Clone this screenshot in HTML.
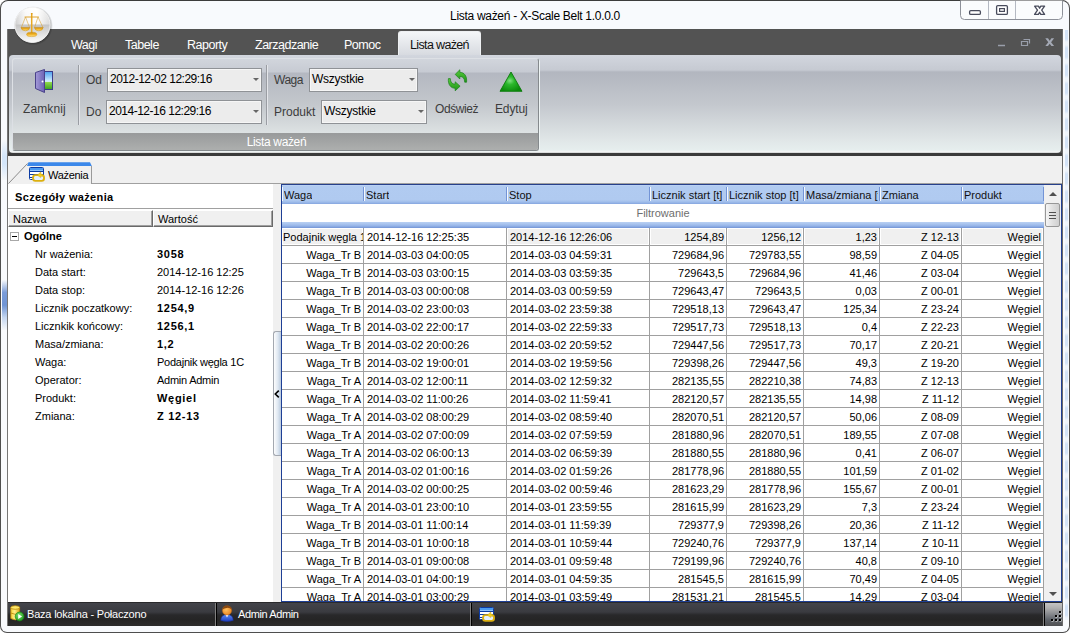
<!DOCTYPE html>
<html lang="pl"><head><meta charset="utf-8"><title>Lista ważeń - X-Scale Belt 1.0.0.0</title>
<style>
*{box-sizing:border-box;margin:0;padding:0}
html,body{width:1070px;height:633px;overflow:hidden;background:#fff}
body{position:relative;font-family:"Liberation Sans","DejaVu Sans",sans-serif;font-size:11px;color:#000}
.abs{position:absolute}
#frame{left:0;top:0;width:1070px;height:633px;border:1px solid #4e4e4e;border-top-color:#3c3c3c;border-radius:8px 8px 7px 7px;background:#f8fafd}
#title{left:0;top:9px;width:1070px;text-align:center;font-size:12px;color:#000;letter-spacing:-0.3px}
#dark{left:7px;top:29px;width:1056px;height:127px;background:#535353}
.mt{top:38px;font-size:12.5px;color:#fff;white-space:nowrap;letter-spacing:-0.5px}
#atab{left:398px;top:31px;width:83px;height:25px;border-radius:3px 3px 0 0;background:linear-gradient(#f4f6f8,#d6d9df);border:1px solid #eef0f2;border-bottom:none}
#atab span{position:absolute;left:0;width:100%;top:6px;text-align:center;font-size:12.5px;color:#111;letter-spacing:-0.65px}
#ribbon{left:9px;top:55px;width:1052px;height:98px;border-radius:4px;background:linear-gradient(#d2d6de 0,#c6cad2 15px,#b2b6bf 17px,#c4c8ce 50px,#e1e7e8 86px,#e6eeee 95px,#f2f4f4 96.500px,#cfd1d1 98px)}
#under{left:7px;top:153px;width:1056px;height:3px;background:#3b3b3b}
#group{left:12px;top:58px;width:527px;height:93px;border-radius:3px;border:1px solid #dde0e5;border-right-color:#858a8d;border-bottom-color:#858a8d;background:linear-gradient(#d1d5dc 0,#c7cbd3 12.500px,#b4b8c1 14.500px,#c3c7cc 45px,#dde2e3 74px);overflow:hidden;box-shadow:1px 1px 0 #eef4f4}
#gcap{left:0;top:74px;width:527px;height:18px;background:linear-gradient(#989a9b,#aeb0af);color:#fff;font-size:12px;text-align:center;line-height:18px;letter-spacing:-0.35px}
.rl{font-size:12px;color:#3c3c3c;white-space:nowrap}
.combo{height:24px;border:1px solid #8f9296;background:#ececec;font-size:12px;color:#000;line-height:21px;padding-left:2px;white-space:nowrap;letter-spacing:-0.5px;box-shadow:inset 0 0 0 1px #f6f6f6}
.combo i{position:absolute;right:2px;top:9px;width:0;height:0;border:3px solid transparent;border-top:3px solid #666;border-bottom:none}
.vsep{width:1px;background:#9a9da3;box-shadow:1px 0 0 #e4e6ea}
#below{left:8px;top:156px;width:1054px;height:29px;background:#f0f0f0}
#tabline{left:92px;top:183px;width:970px;height:1px;background:#a0a0a0}
#leftp{left:8px;top:184px;width:265px;height:418px;background:#fff;}
#split{left:273px;top:184px;width:8px;height:418px;background:#f0f0f0}
#gridb{left:281px;top:184px;width:781px;height:418px;background:#fff;border:1px solid #1e3f95;border-top-color:#27408b;overflow:hidden}
.hc{position:absolute;top:0;height:19px;background:linear-gradient(#c3d8f6 0,#b1cbf1 1px,#b0caf0 15px,#9fbdeb 17px,#84a5df 19px)}
.hc::before{content:"";position:absolute;left:0;top:2px;width:1px;height:14px;background:#f4f8fd}
.hc::after{content:"";position:absolute;right:0;top:2px;width:1px;height:14px;background:#7394d6}
.hc span{position:absolute;left:2px;top:4px;white-space:nowrap;color:#111;overflow:hidden;max-width:calc(100% - 4px)}
.row{position:absolute;left:0;width:762px;height:18px}
.c{position:absolute;top:0;height:18px;border-right:1px solid #a0a0a0;border-bottom:1px solid #a0a0a0;overflow:hidden;white-space:nowrap;line-height:19px}
.c.l{padding-left:3px;text-align:left}.c.l0{padding-left:1px;text-align:left}
.c.r{padding-right:2px;text-align:right}
.foc .c{background:#f0f0f0;box-shadow:inset 0 0 0 1px #fff}
.foc .c.fc{background:#fff}
.pn,.pv{position:absolute;white-space:nowrap;line-height:18px;height:18px}
.pn{left:27px}.pv{left:149px}
.b{font-weight:bold}.pv.b{letter-spacing:0.7px}
#status{left:8px;top:602px;width:1054px;height:24px;background:linear-gradient(#2a2a2c 0,#2a2a2c 1px,#43444a 1px,#3a3b40 10px,#28282a 13px,#252525 18px,#2c2c2c 24px)}
.st{position:absolute;top:6px;color:#fff;font-size:11px;white-space:nowrap}
.ssep{position:absolute;top:1px;width:1px;height:23px;background:#000;box-shadow:-1px 0 0 #808080}
</style></head><body>
<svg width="0" height="0" style="position:absolute"><defs>
<symbol id="tblico" viewBox="0 0 17 17">
  <rect x="0.500" y="1.500" width="14" height="12" rx="1" fill="#fff" stroke="#0b3ba3"/>
  <rect x="1" y="2" width="13" height="2.600" fill="#4a9af0"/>
  <path d="M1 5.500H14M1 8.500H14M1 11.500H14" stroke="#0b3ba3" stroke-width="1"/>
  <rect x="4.100" y="9.100" width="10.900" height="5.800" rx="2.300" fill="#e6f2fc" stroke="#dcb010" stroke-width="1.900"/>
  <path d="M8.300 9.300L11.800 5.800V8.200H13.600V10.300H11.800V11.500Z" fill="#f2d020" stroke="#c79a10" stroke-width="0.400"/>
</symbol></defs></svg>
<div id="frame" class="abs"></div>
<div id="title" class="abs">Lista ważeń - X-Scale Belt 1.0.0.0</div>

<!-- caption buttons -->
<svg class="abs" style="left:960px;top:0" width="104" height="21" viewBox="0 0 104 21">
 <path d="M0.500 0.500V15.500Q0.500 19.500 4.500 19.500H98.500Q102.500 19.500 102.500 15.500V0.500" fill="#fafcfd" stroke="#8d9199"/>
 <path d="M28.500 1V19M55.500 1V19" stroke="#b4b9c2"/>
 <rect x="9.600" y="10.600" width="10.800" height="3.800" rx="1.200" fill="#fff" stroke="#484c5c" stroke-width="1.300"/>
 <rect x="36.600" y="5.600" width="10.800" height="8.800" rx="1.200" fill="#fff" stroke="#484c5c" stroke-width="1.300"/>
 <rect x="39.600" y="8.600" width="4.800" height="2.800" fill="#fff" stroke="#484c5c" stroke-width="1.200"/>
 <path d="M74.600 6.200H78.400L79.600 8.200L80.800 6.200H84.600L81.700 10.200L84.600 14.400H80.800L79.600 12.300L78.400 14.400H74.600L77.500 10.200Z" fill="#fff" stroke="#484c5c" stroke-width="1.300" stroke-linejoin="round"/>
</svg>

<div id="dark" class="abs"></div>
<div class="abs mt" style="left:71px">Wagi</div>
<div class="abs mt" style="left:125px">Tabele</div>
<div class="abs mt" style="left:187px">Raporty</div>
<div class="abs mt" style="left:255px">Zarządzanie</div>
<div class="abs mt" style="left:344px">Pomoc</div>
<div id="atab" class="abs"><span>Lista ważeń</span></div>

<!-- mdi buttons -->
<svg class="abs" style="left:990px;top:33px" width="70" height="18" viewBox="0 0 70 18">
 <path d="M8 12.500H15" stroke="#999eaa" stroke-width="1.500"/>
 <path d="M33.500 6.500H39.500V10.500M31.500 8.500H37.500V12.500H31.500Z" fill="none" stroke="#999eaa" stroke-width="1.200"/>
 <path d="M55.300 5.300H58L59.700 7.700L61.400 5.300H64.100L61.100 9.200L64.100 13.100H61.400L59.700 10.700L58 13.100H55.300L58.300 9.200Z" fill="#a4a9b5"/>
</svg>

<div id="under" class="abs"></div>
<div id="ribbon" class="abs"></div>
<div id="group" class="abs">
  <div id="gcap" class="abs">Lista ważeń</div>
</div>
<!-- ribbon items (absolute to page) -->
<svg class="abs" style="left:33px;top:68px" width="22" height="26" viewBox="0 0 22 26">
  <defs><linearGradient id="sky" x1="0" y1="0" x2="0" y2="1"><stop offset="0" stop-color="#4aa0f0"/><stop offset="0.550" stop-color="#d8f0ff"/><stop offset="0.600" stop-color="#8fd84a"/><stop offset="1" stop-color="#3aa020"/></linearGradient>
  <linearGradient id="door" x1="0" y1="0" x2="1" y2="0"><stop offset="0" stop-color="#a49ad8"/><stop offset="1" stop-color="#6c62b4"/></linearGradient></defs>
  <rect x="9.500" y="3.500" width="10" height="18" fill="url(#sky)" stroke="#3a3a8a"/>
  <path d="M2.500 4.500L11.500 1.500V24.500L2.500 20.500Z" fill="url(#door)" stroke="#4a428a"/>
  <circle cx="9.500" cy="13.500" r="1" fill="#fff"/>
</svg>
<div class="abs rl" style="left:23px;top:102px;letter-spacing:0.1px">Zamknij</div>
<div class="abs vsep" style="left:78px;top:65px;height:60px"></div>
<div class="abs rl" style="left:86px;top:73px">Od</div>
<div class="abs combo" style="left:107px;top:68px;width:155px">2012-12-02 12:29:16<i></i></div>
<div class="abs rl" style="left:86px;top:105px">Do</div>
<div class="abs combo" style="left:106px;top:100px;width:156px">2014-12-16 12:29:16<i></i></div>
<div class="abs vsep" style="left:266px;top:65px;height:60px"></div>
<div class="abs rl" style="left:274px;top:73px;letter-spacing:-0.5px">Waga</div>
<div class="abs combo" style="left:309px;top:68px;width:109px;letter-spacing:-0.25px">Wszystkie<i></i></div>
<div class="abs rl" style="left:274px;top:105px">Produkt</div>
<div class="abs combo" style="left:321px;top:100px;width:106px;letter-spacing:-0.25px">Wszystkie<i></i></div>
<!-- refresh icon -->
<svg class="abs" style="left:446px;top:68px" width="24" height="26" viewBox="0 0 24 26">
  <defs><linearGradient id="rg" x1="0" y1="0" x2="0" y2="1"><stop offset="0" stop-color="#58cc3c"/><stop offset="1" stop-color="#1f9418"/></linearGradient></defs>
  <path d="M9.200 6.400L13.800 1.800L13.800 4.300C18.200 4.300 21.200 8 20.600 14.200L18.700 14.200C18.600 10.500 17 8.400 13.800 8.400L13.800 11Z" fill="url(#rg)" stroke="#1a801a" stroke-width="0.700"/>
  <path d="M14.100 18.200L9.200 22.800L9.200 20.300C4.800 20.300 1.800 16.500 2.400 10.600L4.300 10.600C4.400 14 6 16.200 9.200 16.200L9.200 13.800Z" fill="url(#rg)" stroke="#1a801a" stroke-width="0.700"/>
</svg>
<div class="abs rl" style="left:435px;top:102px;letter-spacing:-0.4px">Odśwież</div>
<svg class="abs" style="left:497px;top:68px" width="28" height="26" viewBox="0 0 28 26">
  <defs><radialGradient id="tri" cx="0.450" cy="0.450" r="0.600"><stop offset="0" stop-color="#7fe07f"/><stop offset="0.350" stop-color="#2cb82c"/><stop offset="1" stop-color="#0a8a0a"/></radialGradient></defs>
  <path d="M14 4L25 23.300H3Z" fill="url(#tri)" stroke="#0b7a0b" stroke-width="0.900" stroke-linejoin="round"/>
</svg>
<div class="abs rl" style="left:495px;top:102px;letter-spacing:-0.15px">Edytuj</div>

<!-- app button -->
<svg class="abs" style="left:10px;top:3px" width="46" height="46" viewBox="-2 -2 46 46">
  <defs>
  <radialGradient id="orbs" cx="0.500" cy="0.500" r="0.500"><stop offset="0.800" stop-color="#000" stop-opacity="0.450"/><stop offset="1" stop-color="#000" stop-opacity="0"/></radialGradient>
  <linearGradient id="orbt" x1="0" y1="0" x2="1" y2="0"><stop offset="0" stop-color="#c9c9c9"/><stop offset="0.300" stop-color="#f6f6f6"/><stop offset="0.600" stop-color="#ffffff"/><stop offset="1" stop-color="#d2d2d2"/></linearGradient>
  <linearGradient id="orbb" x1="0" y1="0" x2="0" y2="1"><stop offset="0" stop-color="#c4c4c4"/><stop offset="0.500" stop-color="#e2e2e2"/><stop offset="1" stop-color="#ffffff"/></linearGradient>
  <linearGradient id="orbv" x1="0" y1="0" x2="0" y2="1"><stop offset="0" stop-color="#fff" stop-opacity="0.900"/><stop offset="0.350" stop-color="#fff" stop-opacity="0.300"/><stop offset="1" stop-color="#fff" stop-opacity="0"/></linearGradient>
  <linearGradient id="gold" x1="0" y1="0" x2="0" y2="1"><stop offset="0" stop-color="#c98a10"/><stop offset="0.450" stop-color="#f0b020"/><stop offset="1" stop-color="#ffe28a"/></linearGradient>
  <clipPath id="orbclip"><circle cx="20.500" cy="19.900" r="17.400"/></clipPath>
  </defs>
  <circle cx="21.300" cy="20.800" r="19.600" fill="url(#orbs)"/>
  <circle cx="20.500" cy="19.900" r="17.800" fill="#d8d8d8"/>
  <g clip-path="url(#orbclip)">
    <rect x="2" y="1" width="38" height="18.600" fill="url(#orbt)"/>
    <rect x="2" y="1" width="38" height="18.600" fill="url(#orbv)"/>
    <rect x="2" y="19.600" width="38" height="19" fill="url(#orbb)"/>
  </g>
  <circle cx="20.500" cy="19.900" r="17.600" fill="none" stroke="#f4f4f4" stroke-width="0.800"/>
  <g fill="none" stroke="#dc9c1c" stroke-width="0.700">
    <path d="M19.700 8.400V28" stroke="#e8a822" stroke-width="1.500"/>
    <path d="M18.900 8.600H20.500" stroke-width="1.200"/>
    <path d="M12.600 12H26.800" stroke-width="0.900"/>
    <path d="M13.500 12L9.400 22.400M13.500 12L17.500 22.400M26 12L22.600 22.400M26 12L30.900 22.400" stroke="#d9a53a" stroke-width="0.600"/>
    <path d="M9 22.400H17.800Q17.300 25.800 13.400 25.800Q9.500 25.800 9 22.400Z" fill="url(#gold)" stroke="#c98a10" stroke-width="0.500"/>
    <path d="M22.400 22.400H31.200Q30.700 25.800 26.800 25.800Q22.900 25.800 22.400 22.400Z" fill="url(#gold)" stroke="#c98a10" stroke-width="0.500"/>
    <ellipse cx="19.700" cy="29.400" rx="5.100" ry="2.200" fill="url(#gold)" stroke="#d09418" stroke-width="0.500"/>
  </g>
</svg>

<div id="below" class="abs"></div>
<div id="tabline" class="abs"></div>
<!-- Ważenia tab -->
<svg class="abs" style="left:8px;top:161px" width="90" height="24" viewBox="0 0 90 24">
  <path d="M0.500 22.500L19.500 2.500" stroke="#8a8a8a" fill="none"/>
  <path d="M83.500 5V23" stroke="#9a9a9a"/>
  <path d="M19 5L20.500 1.300H82L83.800 5Z" fill="#3b88ea"/>
</svg>
<svg class="abs" style="left:29px;top:166px" width="17" height="17" viewBox="0 0 17 17"><use href="#tblico"/></svg>
<div class="abs" style="left:48px;top:169px;font-size:11px;letter-spacing:-0.3px">Ważenia</div>

<div id="leftp" class="abs">
  <div class="abs b" style="left:7px;top:7px;font-size:11px;letter-spacing:0.35px">Sczegóły ważenia</div>
  <div class="abs" style="left:0;top:24px;width:265px;height:1px;background:#a0a0a0"></div>
  <div class="abs" style="left:0;top:26px;width:145px;height:17px;background:#f0f0f0;border:1px solid #fff;border-right:1px solid #696969;border-bottom:1px solid #696969;box-shadow:inset -1px -1px 0 #a0a0a0;padding:2px 0 0 4px">Nazwa</div>
  <div class="abs" style="left:145px;top:26px;width:120px;height:17px;background:#f0f0f0;border:1px solid #fff;border-right:1px solid #696969;border-bottom:1px solid #696969;box-shadow:inset -1px -1px 0 #a0a0a0;padding:2px 0 0 4px">Wartość</div>
  <div class="abs" style="left:2px;top:48px;width:9px;height:9px;border:1px solid #a8a8a8;background:#fff"></div>
  <div class="abs" style="left:4px;top:52px;width:5px;height:1px;background:#000"></div>
  <div class="abs b" style="left:16px;top:43px;line-height:18px">Ogólne</div>
  <div class="pn" style="top:61px">Nr ważenia:</div><div class="pv b" style="top:61px">3058</div>
<div class="pn" style="top:79px">Data start:</div><div class="pv" style="top:79px">2014-12-16 12:25</div>
<div class="pn" style="top:97px">Data stop:</div><div class="pv" style="top:97px">2014-12-16 12:26</div>
<div class="pn" style="top:115px">Licznik poczatkowy:</div><div class="pv b" style="top:115px">1254,9</div>
<div class="pn" style="top:133px">Licznkik końcowy:</div><div class="pv b" style="top:133px">1256,1</div>
<div class="pn" style="top:151px">Masa/zmiana:</div><div class="pv b" style="top:151px">1,2</div>
<div class="pn" style="top:169px">Waga:</div><div class="pv" style="top:169px;letter-spacing:-0.25px">Podajnik węgla 1C</div>
<div class="pn" style="top:187px">Operator:</div><div class="pv" style="top:187px;letter-spacing:-0.25px">Admin Admin</div>
<div class="pn" style="top:205px">Produkt:</div><div class="pv b" style="top:205px">Węgiel</div>
<div class="pn" style="top:223px">Zmiana:</div><div class="pv b" style="top:223px">Z 12-13</div>

</div>
<div id="split" class="abs">
  <div class="abs" style="left:0px;top:147px;width:8px;height:125px;border:1px solid #a3a8b0;border-right:none;border-radius:3px 0 0 3px;background:linear-gradient(90deg,#fdfdfd,#dfe8f2 55%,#b9c9dd)"></div>
  <svg class="abs" style="left:0;top:204px" width="8" height="12" viewBox="0 0 8 12"><path d="M5.800 2.600L2.300 6L5.800 9.400" fill="none" stroke="#000" stroke-width="1.600"/></svg>
</div>
<div id="gridb" class="abs">
  <div class="hc" style="left:0px;width:82px"><span>Waga</span></div><div class="hc" style="left:82px;width:143px"><span>Start</span></div><div class="hc" style="left:225px;width:143px"><span>Stop</span></div><div class="hc" style="left:368px;width:77px"><span>Licznik start [t]</span></div><div class="hc" style="left:445px;width:77px"><span>Licznik stop [t]</span></div><div class="hc" style="left:522px;width:76px"><span>Masa/zmiana [t]</span></div><div class="hc" style="left:598px;width:82px"><span>Zmiana</span></div><div class="hc" style="left:680px;width:82px"><span>Produkt</span></div>
  <div class="abs" style="left:0;top:19px;width:762px;height:18px;background:#fff;color:#6e6e6e;text-align:center;line-height:18px">Filtrowanie</div>
  <div class="abs" style="left:0;top:37px;width:762px;height:6px;background:linear-gradient(#b9d0f3 0,#a9c4ee 2px,#94b3e7 4px,#7193d6 6px)"></div>
  <div class="row foc" style="top:43px"><div class="c l0" style="left:0px;width:82px"><span>Podajnik węgla 1C</span></div><div class="c l fc" style="left:82px;width:143px"><span>2014-12-16 12:25:35</span></div><div class="c l" style="left:225px;width:143px"><span>2014-12-16 12:26:06</span></div><div class="c r" style="left:368px;width:77px"><span>1254,89</span></div><div class="c r" style="left:445px;width:77px"><span>1256,12</span></div><div class="c r" style="left:522px;width:76px"><span>1,23</span></div><div class="c r" style="left:598px;width:82px"><span>Z 12-13</span></div><div class="c r" style="left:680px;width:82px"><span>Węgiel</span></div></div>
<div class="row" style="top:61px"><div class="c r" style="left:0px;width:82px"><span>Waga_Tr B</span></div><div class="c l" style="left:82px;width:143px"><span>2014-03-03 04:00:05</span></div><div class="c l" style="left:225px;width:143px"><span>2014-03-03 04:59:31</span></div><div class="c r" style="left:368px;width:77px"><span>729684,96</span></div><div class="c r" style="left:445px;width:77px"><span>729783,55</span></div><div class="c r" style="left:522px;width:76px"><span>98,59</span></div><div class="c r" style="left:598px;width:82px"><span>Z 04-05</span></div><div class="c r" style="left:680px;width:82px"><span>Węgiel</span></div></div>
<div class="row" style="top:79px"><div class="c r" style="left:0px;width:82px"><span>Waga_Tr B</span></div><div class="c l" style="left:82px;width:143px"><span>2014-03-03 03:00:15</span></div><div class="c l" style="left:225px;width:143px"><span>2014-03-03 03:59:35</span></div><div class="c r" style="left:368px;width:77px"><span>729643,5</span></div><div class="c r" style="left:445px;width:77px"><span>729684,96</span></div><div class="c r" style="left:522px;width:76px"><span>41,46</span></div><div class="c r" style="left:598px;width:82px"><span>Z 03-04</span></div><div class="c r" style="left:680px;width:82px"><span>Węgiel</span></div></div>
<div class="row" style="top:97px"><div class="c r" style="left:0px;width:82px"><span>Waga_Tr B</span></div><div class="c l" style="left:82px;width:143px"><span>2014-03-03 00:00:08</span></div><div class="c l" style="left:225px;width:143px"><span>2014-03-03 00:59:59</span></div><div class="c r" style="left:368px;width:77px"><span>729643,47</span></div><div class="c r" style="left:445px;width:77px"><span>729643,5</span></div><div class="c r" style="left:522px;width:76px"><span>0,03</span></div><div class="c r" style="left:598px;width:82px"><span>Z 00-01</span></div><div class="c r" style="left:680px;width:82px"><span>Węgiel</span></div></div>
<div class="row" style="top:115px"><div class="c r" style="left:0px;width:82px"><span>Waga_Tr B</span></div><div class="c l" style="left:82px;width:143px"><span>2014-03-02 23:00:03</span></div><div class="c l" style="left:225px;width:143px"><span>2014-03-02 23:59:38</span></div><div class="c r" style="left:368px;width:77px"><span>729518,13</span></div><div class="c r" style="left:445px;width:77px"><span>729643,47</span></div><div class="c r" style="left:522px;width:76px"><span>125,34</span></div><div class="c r" style="left:598px;width:82px"><span>Z 23-24</span></div><div class="c r" style="left:680px;width:82px"><span>Węgiel</span></div></div>
<div class="row" style="top:133px"><div class="c r" style="left:0px;width:82px"><span>Waga_Tr B</span></div><div class="c l" style="left:82px;width:143px"><span>2014-03-02 22:00:17</span></div><div class="c l" style="left:225px;width:143px"><span>2014-03-02 22:59:33</span></div><div class="c r" style="left:368px;width:77px"><span>729517,73</span></div><div class="c r" style="left:445px;width:77px"><span>729518,13</span></div><div class="c r" style="left:522px;width:76px"><span>0,4</span></div><div class="c r" style="left:598px;width:82px"><span>Z 22-23</span></div><div class="c r" style="left:680px;width:82px"><span>Węgiel</span></div></div>
<div class="row" style="top:151px"><div class="c r" style="left:0px;width:82px"><span>Waga_Tr B</span></div><div class="c l" style="left:82px;width:143px"><span>2014-03-02 20:00:26</span></div><div class="c l" style="left:225px;width:143px"><span>2014-03-02 20:59:52</span></div><div class="c r" style="left:368px;width:77px"><span>729447,56</span></div><div class="c r" style="left:445px;width:77px"><span>729517,73</span></div><div class="c r" style="left:522px;width:76px"><span>70,17</span></div><div class="c r" style="left:598px;width:82px"><span>Z 20-21</span></div><div class="c r" style="left:680px;width:82px"><span>Węgiel</span></div></div>
<div class="row" style="top:169px"><div class="c r" style="left:0px;width:82px"><span>Waga_Tr B</span></div><div class="c l" style="left:82px;width:143px"><span>2014-03-02 19:00:01</span></div><div class="c l" style="left:225px;width:143px"><span>2014-03-02 19:59:56</span></div><div class="c r" style="left:368px;width:77px"><span>729398,26</span></div><div class="c r" style="left:445px;width:77px"><span>729447,56</span></div><div class="c r" style="left:522px;width:76px"><span>49,3</span></div><div class="c r" style="left:598px;width:82px"><span>Z 19-20</span></div><div class="c r" style="left:680px;width:82px"><span>Węgiel</span></div></div>
<div class="row" style="top:187px"><div class="c r" style="left:0px;width:82px"><span>Waga_Tr A</span></div><div class="c l" style="left:82px;width:143px"><span>2014-03-02 12:00:11</span></div><div class="c l" style="left:225px;width:143px"><span>2014-03-02 12:59:32</span></div><div class="c r" style="left:368px;width:77px"><span>282135,55</span></div><div class="c r" style="left:445px;width:77px"><span>282210,38</span></div><div class="c r" style="left:522px;width:76px"><span>74,83</span></div><div class="c r" style="left:598px;width:82px"><span>Z 12-13</span></div><div class="c r" style="left:680px;width:82px"><span>Węgiel</span></div></div>
<div class="row" style="top:205px"><div class="c r" style="left:0px;width:82px"><span>Waga_Tr A</span></div><div class="c l" style="left:82px;width:143px"><span>2014-03-02 11:00:26</span></div><div class="c l" style="left:225px;width:143px"><span>2014-03-02 11:59:41</span></div><div class="c r" style="left:368px;width:77px"><span>282120,57</span></div><div class="c r" style="left:445px;width:77px"><span>282135,55</span></div><div class="c r" style="left:522px;width:76px"><span>14,98</span></div><div class="c r" style="left:598px;width:82px"><span>Z 11-12</span></div><div class="c r" style="left:680px;width:82px"><span>Węgiel</span></div></div>
<div class="row" style="top:223px"><div class="c r" style="left:0px;width:82px"><span>Waga_Tr A</span></div><div class="c l" style="left:82px;width:143px"><span>2014-03-02 08:00:29</span></div><div class="c l" style="left:225px;width:143px"><span>2014-03-02 08:59:40</span></div><div class="c r" style="left:368px;width:77px"><span>282070,51</span></div><div class="c r" style="left:445px;width:77px"><span>282120,57</span></div><div class="c r" style="left:522px;width:76px"><span>50,06</span></div><div class="c r" style="left:598px;width:82px"><span>Z 08-09</span></div><div class="c r" style="left:680px;width:82px"><span>Węgiel</span></div></div>
<div class="row" style="top:241px"><div class="c r" style="left:0px;width:82px"><span>Waga_Tr A</span></div><div class="c l" style="left:82px;width:143px"><span>2014-03-02 07:00:09</span></div><div class="c l" style="left:225px;width:143px"><span>2014-03-02 07:59:59</span></div><div class="c r" style="left:368px;width:77px"><span>281880,96</span></div><div class="c r" style="left:445px;width:77px"><span>282070,51</span></div><div class="c r" style="left:522px;width:76px"><span>189,55</span></div><div class="c r" style="left:598px;width:82px"><span>Z 07-08</span></div><div class="c r" style="left:680px;width:82px"><span>Węgiel</span></div></div>
<div class="row" style="top:259px"><div class="c r" style="left:0px;width:82px"><span>Waga_Tr A</span></div><div class="c l" style="left:82px;width:143px"><span>2014-03-02 06:00:13</span></div><div class="c l" style="left:225px;width:143px"><span>2014-03-02 06:59:39</span></div><div class="c r" style="left:368px;width:77px"><span>281880,55</span></div><div class="c r" style="left:445px;width:77px"><span>281880,96</span></div><div class="c r" style="left:522px;width:76px"><span>0,41</span></div><div class="c r" style="left:598px;width:82px"><span>Z 06-07</span></div><div class="c r" style="left:680px;width:82px"><span>Węgiel</span></div></div>
<div class="row" style="top:277px"><div class="c r" style="left:0px;width:82px"><span>Waga_Tr A</span></div><div class="c l" style="left:82px;width:143px"><span>2014-03-02 01:00:16</span></div><div class="c l" style="left:225px;width:143px"><span>2014-03-02 01:59:26</span></div><div class="c r" style="left:368px;width:77px"><span>281778,96</span></div><div class="c r" style="left:445px;width:77px"><span>281880,55</span></div><div class="c r" style="left:522px;width:76px"><span>101,59</span></div><div class="c r" style="left:598px;width:82px"><span>Z 01-02</span></div><div class="c r" style="left:680px;width:82px"><span>Węgiel</span></div></div>
<div class="row" style="top:295px"><div class="c r" style="left:0px;width:82px"><span>Waga_Tr A</span></div><div class="c l" style="left:82px;width:143px"><span>2014-03-02 00:00:25</span></div><div class="c l" style="left:225px;width:143px"><span>2014-03-02 00:59:46</span></div><div class="c r" style="left:368px;width:77px"><span>281623,29</span></div><div class="c r" style="left:445px;width:77px"><span>281778,96</span></div><div class="c r" style="left:522px;width:76px"><span>155,67</span></div><div class="c r" style="left:598px;width:82px"><span>Z 00-01</span></div><div class="c r" style="left:680px;width:82px"><span>Węgiel</span></div></div>
<div class="row" style="top:313px"><div class="c r" style="left:0px;width:82px"><span>Waga_Tr A</span></div><div class="c l" style="left:82px;width:143px"><span>2014-03-01 23:00:10</span></div><div class="c l" style="left:225px;width:143px"><span>2014-03-01 23:59:55</span></div><div class="c r" style="left:368px;width:77px"><span>281615,99</span></div><div class="c r" style="left:445px;width:77px"><span>281623,29</span></div><div class="c r" style="left:522px;width:76px"><span>7,3</span></div><div class="c r" style="left:598px;width:82px"><span>Z 23-24</span></div><div class="c r" style="left:680px;width:82px"><span>Węgiel</span></div></div>
<div class="row" style="top:331px"><div class="c r" style="left:0px;width:82px"><span>Waga_Tr B</span></div><div class="c l" style="left:82px;width:143px"><span>2014-03-01 11:00:14</span></div><div class="c l" style="left:225px;width:143px"><span>2014-03-01 11:59:39</span></div><div class="c r" style="left:368px;width:77px"><span>729377,9</span></div><div class="c r" style="left:445px;width:77px"><span>729398,26</span></div><div class="c r" style="left:522px;width:76px"><span>20,36</span></div><div class="c r" style="left:598px;width:82px"><span>Z 11-12</span></div><div class="c r" style="left:680px;width:82px"><span>Węgiel</span></div></div>
<div class="row" style="top:349px"><div class="c r" style="left:0px;width:82px"><span>Waga_Tr B</span></div><div class="c l" style="left:82px;width:143px"><span>2014-03-01 10:00:18</span></div><div class="c l" style="left:225px;width:143px"><span>2014-03-01 10:59:44</span></div><div class="c r" style="left:368px;width:77px"><span>729240,76</span></div><div class="c r" style="left:445px;width:77px"><span>729377,9</span></div><div class="c r" style="left:522px;width:76px"><span>137,14</span></div><div class="c r" style="left:598px;width:82px"><span>Z 10-11</span></div><div class="c r" style="left:680px;width:82px"><span>Węgiel</span></div></div>
<div class="row" style="top:367px"><div class="c r" style="left:0px;width:82px"><span>Waga_Tr B</span></div><div class="c l" style="left:82px;width:143px"><span>2014-03-01 09:00:08</span></div><div class="c l" style="left:225px;width:143px"><span>2014-03-01 09:59:48</span></div><div class="c r" style="left:368px;width:77px"><span>729199,96</span></div><div class="c r" style="left:445px;width:77px"><span>729240,76</span></div><div class="c r" style="left:522px;width:76px"><span>40,8</span></div><div class="c r" style="left:598px;width:82px"><span>Z 09-10</span></div><div class="c r" style="left:680px;width:82px"><span>Węgiel</span></div></div>
<div class="row" style="top:385px"><div class="c r" style="left:0px;width:82px"><span>Waga_Tr A</span></div><div class="c l" style="left:82px;width:143px"><span>2014-03-01 04:00:19</span></div><div class="c l" style="left:225px;width:143px"><span>2014-03-01 04:59:35</span></div><div class="c r" style="left:368px;width:77px"><span>281545,5</span></div><div class="c r" style="left:445px;width:77px"><span>281615,99</span></div><div class="c r" style="left:522px;width:76px"><span>70,49</span></div><div class="c r" style="left:598px;width:82px"><span>Z 04-05</span></div><div class="c r" style="left:680px;width:82px"><span>Węgiel</span></div></div>
<div class="row" style="top:403px"><div class="c r" style="left:0px;width:82px"><span>Waga_Tr A</span></div><div class="c l" style="left:82px;width:143px"><span>2014-03-01 03:00:29</span></div><div class="c l" style="left:225px;width:143px"><span>2014-03-01 03:59:49</span></div><div class="c r" style="left:368px;width:77px"><span>281531,21</span></div><div class="c r" style="left:445px;width:77px"><span>281545,5</span></div><div class="c r" style="left:522px;width:76px"><span>14,29</span></div><div class="c r" style="left:598px;width:82px"><span>Z 03-04</span></div><div class="c r" style="left:680px;width:82px"><span>Węgiel</span></div></div>

  <!-- scrollbar -->
  <div class="abs" style="left:762px;top:0;width:17px;height:416px;background:#f0f0f0"></div>
  <div class="abs" style="left:767px;top:7px;width:0;height:0;border:4px solid transparent;border-bottom:4px solid #505050;border-top:none"></div>
  <div class="abs" style="left:767px;top:407px;width:0;height:0;border:4px solid transparent;border-top:4px solid #505050;border-bottom:none"></div>
  <div class="abs" style="left:763px;top:18px;width:15px;height:24px;border:1px solid #979797;border-radius:2px;background:linear-gradient(90deg,#f5f5f5,#e0e0e0 50%,#d0d0d0)"></div>
  <div class="abs" style="left:767px;top:27px;width:7px;height:1px;background:#505050;box-shadow:0 3px 0 #505050,0 6px 0 #505050"></div>
</div>

<div id="status" class="abs">
  <svg class="abs" style="left:1px;top:2px" width="18" height="20" viewBox="0 0 18 20">
    <defs><linearGradient id="cyl" x1="0" y1="0" x2="1" y2="0"><stop offset="0" stop-color="#f8d23a"/><stop offset="0.450" stop-color="#ffee88"/><stop offset="1" stop-color="#d9a010"/></linearGradient>
    <radialGradient id="gb" cx="0.400" cy="0.350" r="0.700"><stop offset="0" stop-color="#7be06a"/><stop offset="1" stop-color="#1f9a1f"/></radialGradient></defs>
    <path d="M1.800 3.500V14.500Q6.200 17.300 10.600 14.500V3.500Z" fill="url(#cyl)" stroke="#b98708" stroke-width="0.800"/>
    <ellipse cx="6.200" cy="3.500" rx="4.400" ry="1.800" fill="#ffe96a" stroke="#b98708" stroke-width="0.800"/>
    <path d="M1.800 9Q6.200 11.600 10.600 9" fill="none" stroke="#b98708" stroke-width="0.800"/>
    <circle cx="10.600" cy="12.500" r="4.400" fill="url(#gb)" stroke="#188a18" stroke-width="0.700"/>
    <path d="M9.200 10L13.100 12.500L9.200 15Z" fill="#fff"/>
  </svg>
  <div class="st" style="left:19px;letter-spacing:-0.2px">Baza lokalna - Połaczono</div>
  <div class="ssep" style="left:208px"></div>
  <svg class="abs" style="left:212px;top:2px" width="14" height="18" viewBox="0 0 14 18">
    <defs><radialGradient id="hd" cx="0.400" cy="0.400" r="0.700"><stop offset="0" stop-color="#ffc060"/><stop offset="1" stop-color="#e8801a"/></radialGradient>
    <linearGradient id="bd" x1="0" y1="0" x2="0" y2="1"><stop offset="0" stop-color="#5a8af0"/><stop offset="1" stop-color="#1f3fc0"/></linearGradient></defs>
    <path d="M0.800 16.500Q0.800 10.500 7 10.500Q13.200 10.500 13.200 16.500Q7 18.500 0.800 16.500Z" fill="url(#bd)" stroke="#1a2f9a" stroke-width="0.600"/>
    <path d="M5.500 10.800L7 13.500L8.500 10.800Z" fill="#fff"/>
    <circle cx="7" cy="6.500" r="4.600" fill="url(#hd)" stroke="#c86a10" stroke-width="0.500"/>
    <path d="M2.300 5.800Q2.800 1.200 7.500 1.400Q11.800 1.800 11.700 5.500Q9 2.800 5.500 4.200Q3.500 4.500 2.300 5.800Z" fill="#8a4a12"/>
  </svg>
  <div class="st" style="left:230px;letter-spacing:-0.4px">Admin Admin</div>
  <div class="ssep" style="left:463px"></div>
  <svg class="abs" style="left:471px;top:4px" width="17" height="17" viewBox="0 0 17 17"><use href="#tblico"/></svg>
  <div class="abs" style="left:1035px;top:1px;width:19px;height:23px;background:linear-gradient(#c4c4c4 0,#b0b0b0 5px,#8e9094 10px,#5c6168 17px,#4e4f52 23px);border-left:1px solid #808080;box-shadow:inset 1px 0 0 #000"></div>
  <svg class="abs" style="left:1041px;top:7px" width="14" height="14" viewBox="0 0 14 14"><g fill="#fff"><rect x="10.500" y="2.500" width="2" height="2"/><rect x="6.500" y="6.500" width="2" height="2"/><rect x="10.500" y="6.500" width="2" height="2"/><rect x="2.500" y="10.500" width="2" height="2"/><rect x="6.500" y="10.500" width="2" height="2"/><rect x="10.500" y="10.500" width="2" height="2"/></g><g fill="#000"><rect x="10" y="2" width="2" height="2"/><rect x="6" y="6" width="2" height="2"/><rect x="10" y="6" width="2" height="2"/><rect x="2" y="10" width="2" height="2"/><rect x="6" y="10" width="2" height="2"/><rect x="10" y="10" width="2" height="2"/></g></svg>
</div>
<div class="abs" style="left:7px;top:29px;width:1px;height:597px;background:#757575"></div>
<div class="abs" style="left:1062px;top:29px;width:1px;height:597px;background:#6a6a6a"></div>
<div class="abs" style="left:1065px;top:30px;width:3px;height:590px;background:repeating-linear-gradient(#cfe0f6 0,#cfe0f6 9px,#eef4fb 12px,#eef4fb 15px,#cfe0f6 18px);opacity:0.900"></div>
<div class="abs" style="left:2px;top:140px;width:5px;height:40px;background:linear-gradient(#f6f8fa,#d4e6fa 40%,#d4e6fa 60%,#f6f8fa)"></div>
<div class="abs" style="left:2px;top:280px;width:5px;height:50px;background:linear-gradient(#f6f8fa,#7a9cd8 25%,#6f94d4 50%,#c4d6f0 75%,#f6f8fa)"></div>
</body></html>
